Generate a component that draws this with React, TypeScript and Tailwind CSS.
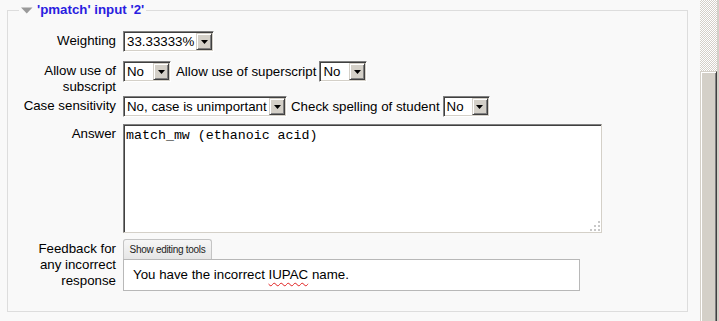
import React from 'react';

interface ComboProps {
  value: string;
  width: number;
}

// old windows-style dropdown
const Combo = ({ value, width }: ComboProps) => (
  <div
    className="flex h-[21px] shrink-0 items-stretch border border-t-[#808080] border-l-[#808080] border-b-white border-r-white bg-white shadow-[inset_1px_1px_0_#404040,inset_-1px_-1px_0_#d4d0c8]"
    style={{ width }}
  >
    <div className="flex flex-1 items-center overflow-hidden whitespace-nowrap pl-[3px] pt-px text-[13.3px] leading-none text-black">
      {value}
    </div>
    <div className="my-[1px] mr-[1px] flex w-[16px] items-center justify-center border border-t-[#d4d0c8] border-l-[#d4d0c8] border-b-[#404040] border-r-[#404040] bg-[#d4d0c8] shadow-[inset_1px_1px_0_#ffffff,inset_-1px_-1px_0_#808080]">
      <svg width="7" height="4" viewBox="0 0 7 4">
        <path d="M0 0h7L3.5 4z" fill="#000" />
      </svg>
    </div>
  </div>
);

const Label = ({ children }: { children: React.ReactNode }) => (
  <div className="w-[100px] shrink-0 pt-[2px] text-right text-[13.3px] leading-[16px] text-black">{children}</div>
);

export default function App() {
  return (
    <div className="flex h-[321px] w-[719px] overflow-hidden bg-[#f9f9f9] font-['Liberation_Sans',Arial,sans-serif]">
      <div className="w-[700px] shrink-0 pl-[7px] pt-[2px]">
        <fieldset className="w-[681px] border border-[#dddddd] pb-[20px] pl-[8px]">
          <legend className="ml-[3px] flex items-center px-[2px]">
            <svg width="12" height="7" viewBox="0 0 12 7" className="mr-[4px]">
              <path d="M0 0.5h11.5L5.75 6.5z" fill="#9a9a9a" />
            </svg>
            <span className="text-[13.3px] font-bold leading-[16px] text-[#2a1de0]">'pmatch' input '2'</span>
          </legend>

          <div className="mt-[13px] flex gap-[7px]">
            <Label>Weighting</Label>
            <Combo value="33.33333%" width={91} />
          </div>

          <div className="mt-[9px] flex gap-[7px]">
            <Label>Allow use of subscript</Label>
            <div className="flex items-start">
              <Combo value="No" width={48} />
              <span className="ml-[5px] mr-[3px] pt-[3px] text-[13.3px] leading-[16px] whitespace-nowrap">Allow use of superscript</span>
              <Combo value="No" width={48} />
            </div>
          </div>

          <div className="mt-[1px] flex gap-[7px]">
            <Label>Case sensitivity</Label>
            <div className="flex items-start">
              <Combo value="No, case is unimportant" width={164} />
              <span className="ml-[4px] mr-[3px] pt-[3px] text-[13.3px] leading-[16px] whitespace-nowrap">Check spelling of student</span>
              <Combo value="No" width={47} />
            </div>
          </div>

          <div className="mt-[7px] flex gap-[7px]">
            <Label>Answer</Label>
            <div className="relative h-[109px] w-[479px] border border-t-[#808080] border-l-[#808080] border-b-[#d4d0c8] border-r-[#d4d0c8] bg-white px-[2px] pt-[3px] shadow-[inset_1px_1px_0_#404040]">
              <div className="font-['Liberation_Mono','Courier_New',monospace] text-[13.3px] leading-[15px] text-black">match_mw (ethanoic acid)</div>
              <svg width="10" height="10" viewBox="0 0 10 10" className="absolute bottom-[1px] right-[1px]">
                <g fill="#c8c8c8">
                  <rect x="8" y="0" width="2" height="2" />
                  <rect x="4" y="4" width="2" height="2" />
                  <rect x="8" y="4" width="2" height="2" />
                  <rect x="0" y="8" width="2" height="2" />
                  <rect x="4" y="8" width="2" height="2" />
                  <rect x="8" y="8" width="2" height="2" />
                </g>
              </svg>
            </div>
          </div>

          <div className="mt-[6px] flex gap-[7px]">
            <Label>Feedback for any incorrect response</Label>
            <div className="flex flex-col">
              <div className="flex h-[20px] w-[89px] items-center justify-center whitespace-nowrap rounded-t-[3px] border border-b-0 border-[#c4c4c4] bg-gradient-to-b from-[#f6f6f6] to-[#e6e6e6] text-[10px] leading-none tracking-[-0.3px] text-[#222]">
                Show editing tools
              </div>
              <div className="flex h-[32px] w-[457px] items-center border border-[#b8b8b8] bg-white pl-[9px] text-[13.3px] leading-[16px] text-black">
                <span>
                  You have the incorrect{' '}
                  <span className="underline decoration-wavy decoration-[#e02020] decoration-1 underline-offset-[3px]">IUPAC</span> name.
                </span>
              </div>
            </div>
          </div>
        </fieldset>
      </div>

      {/* scrollbar */}
      <div className="flex w-[19px] shrink-0 bg-[repeating-conic-gradient(#d4d0c8_0_25%,#ffffff_0_50%)] bg-[length:2px_2px]">
        <div className="w-[17px]">
          <div className="mt-[71px] h-[260px] border border-t-[#d4d0c8] border-l-[#d4d0c8] border-b-[#404040] border-r-[#404040] bg-[#d4d0c8] shadow-[inset_1px_1px_0_#ffffff,inset_-1px_-1px_0_#808080]" />
        </div>
        <div className="w-[2px] bg-[#d4d0c8]" />
      </div>
    </div>
  );
}
